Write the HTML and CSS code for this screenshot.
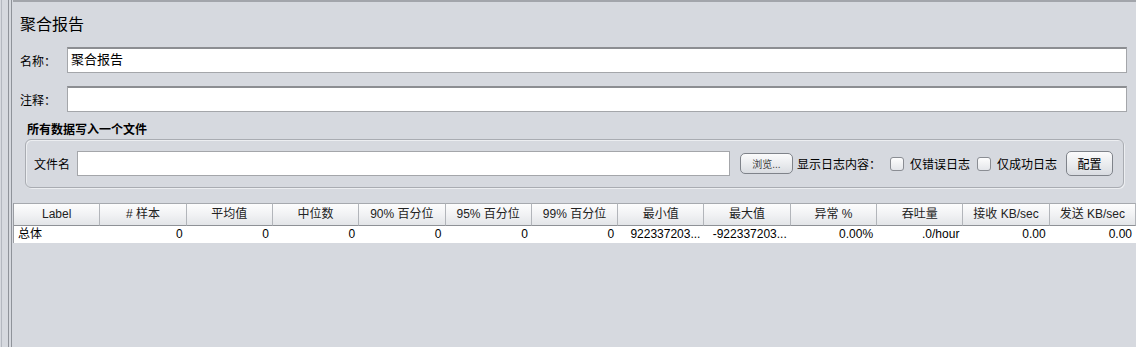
FILE: index.html
```html
<!DOCTYPE html>
<html lang="zh-CN">
<head>
  <meta charset="UTF-8">
  <title>聚合报告</title>
  <link rel="stylesheet" href="styles.css">
</head>
<body>
  <div class="ventana">
    <div class="margen"><div class="margen-doble"></div></div>
    <div class="panel">
      <div class="titulo">聚合报告</div>

      <div class="fila">
        <label class="etiqueta">名称：</label>
        <div class="campo">聚合报告</div>
      </div>
      <div class="fila">
        <label class="etiqueta">注释：</label>
        <div class="campo"></div>
      </div>

      <div class="seccion">所有数据写入一个文件</div>
      <div class="grupo">
        <span class="texto">文件名</span>
        <div class="campo campo-archivo"></div>
        <button class="boton pequeno">浏览...</button>
        <span class="texto">显示日志内容：</span>
        <span class="check primero"></span>
        <span class="texto">仅错误日志</span>
        <span class="check"></span>
        <span class="texto">仅成功日志</span>
        <button class="boton grande">配置</button>
      </div>

      <div class="tabla">
        <div class="cab">Label</div>
        <div class="cab"># 样本</div>
        <div class="cab">平均值</div>
        <div class="cab">中位数</div>
        <div class="cab">90% 百分位</div>
        <div class="cab">95% 百分位</div>
        <div class="cab">99% 百分位</div>
        <div class="cab">最小值</div>
        <div class="cab">最大值</div>
        <div class="cab">异常 %</div>
        <div class="cab">吞吐量</div>
        <div class="cab">接收 KB/sec</div>
        <div class="cab">发送 KB/sec</div>

        <div class="celda izq">总体</div>
        <div class="celda">0</div>
        <div class="celda">0</div>
        <div class="celda">0</div>
        <div class="celda">0</div>
        <div class="celda">0</div>
        <div class="celda">0</div>
        <div class="celda">922337203...</div>
        <div class="celda">-922337203...</div>
        <div class="celda">0.00%</div>
        <div class="celda">.0/hour</div>
        <div class="celda">0.00</div>
        <div class="celda">0.00</div>
      </div>
    </div>
  </div>
</body>
</html>
```

FILE: styles.css
```css
html, body { margin: 0; padding: 0; background: #d6d9df; }
body { font-family: "Liberation Sans", "Noto Sans CJK SC", sans-serif; font-size: 12px; color: #000; }

.ventana { display: flex; height: 347px; overflow: hidden; }
.margen { width: 6px; margin-left: 1px; border-left: 1px solid #b4b8c0; border-right: 1px solid #f2f3f5; display: flex; }
.margen-doble { width: 2px; margin-left: 6px; border-left: 1px solid #8f939a; border-right: 1px solid #8f939a; flex-shrink: 0; }
.panel { flex: 1; margin-left: 4px; border-top: 2px solid #a2a5ab; display: flex; flex-direction: column; }

.titulo { font-size: 16px; line-height: 20px; padding: 13px 0 0 7px; height: 32px; box-sizing: border-box; }

.fila { display: flex; align-items: center; padding-left: 7px; padding-right: 9px; margin-top: 13px; }
.fila:first-of-type { margin-top: 0; }
.etiqueta { width: 47px; font-size: 12px; }
.campo { flex: 1; height: 26px; box-sizing: border-box; background: #fff; border: 1px solid #a4a6aa; border-top: 2px solid #8c8e92; padding: 0 3px; line-height: 22px; font-size: 13px; }

.seccion { font-weight: bold; font-size: 12px; padding-left: 14px; margin-top: 10px; line-height: 16px; }
.grupo { display: flex; align-items: center; margin: 1px 12px 0 12px; height: 49px; box-sizing: border-box; border: 1px solid #a9acb2; border-radius: 6px; box-shadow: inset 1px 1px 0 #eceef1, 1px 1px 0 #eceef1; padding: 0 10px 0 8px; }
.texto { font-size: 12px; white-space: nowrap; }
.campo-archivo { flex: 1; height: 25px; margin-left: 7px; border-top-width: 1px; border-color: #a4a6aa; }

.boton { font-family: "Liberation Sans", "Noto Sans CJK SC", sans-serif; color: #000; border: 1px solid #7f838a; border-radius: 5px; background: linear-gradient(#fbfbfc, #e9ebee 55%, #d9dce1); padding: 0; cursor: pointer; }
.pequeno { width: 53px; height: 21px; font-size: 10px; margin: 0 4px 0 10px; color: #3c3c3c; }
.grande { width: 47px; height: 25px; font-size: 12px; margin-left: 9px; }

.check { width: 12px; height: 12px; border: 1px solid #8a8d93; border-radius: 3px; background: linear-gradient(#fdfdfd, #e4e6ea); margin: 0 6px 0 7px; flex-shrink: 0; }
.check.primero { margin-left: 9px; }

.tabla { display: grid; grid-template-columns: repeat(13, 1fr); margin-top: 15px; border-left: 1px solid #9a9da3; }
.cab { height: 23px; box-sizing: border-box; text-align: center; line-height: 21px; font-size: 12px; background: linear-gradient(#fdfdfd, #f1f2f4 50%, #e3e5e8); border-top: 1px solid #a6a9ae; border-bottom: 1px solid #8e9196; border-right: 1px solid #b2b5ba; white-space: nowrap; color: #222; }
.celda { height: 17px; line-height: 16px; background: #fff; text-align: right; padding-right: 4px; font-size: 12px; white-space: nowrap; overflow: hidden; }
.celda.izq { text-align: left; padding-left: 4px; padding-right: 0; }
```
